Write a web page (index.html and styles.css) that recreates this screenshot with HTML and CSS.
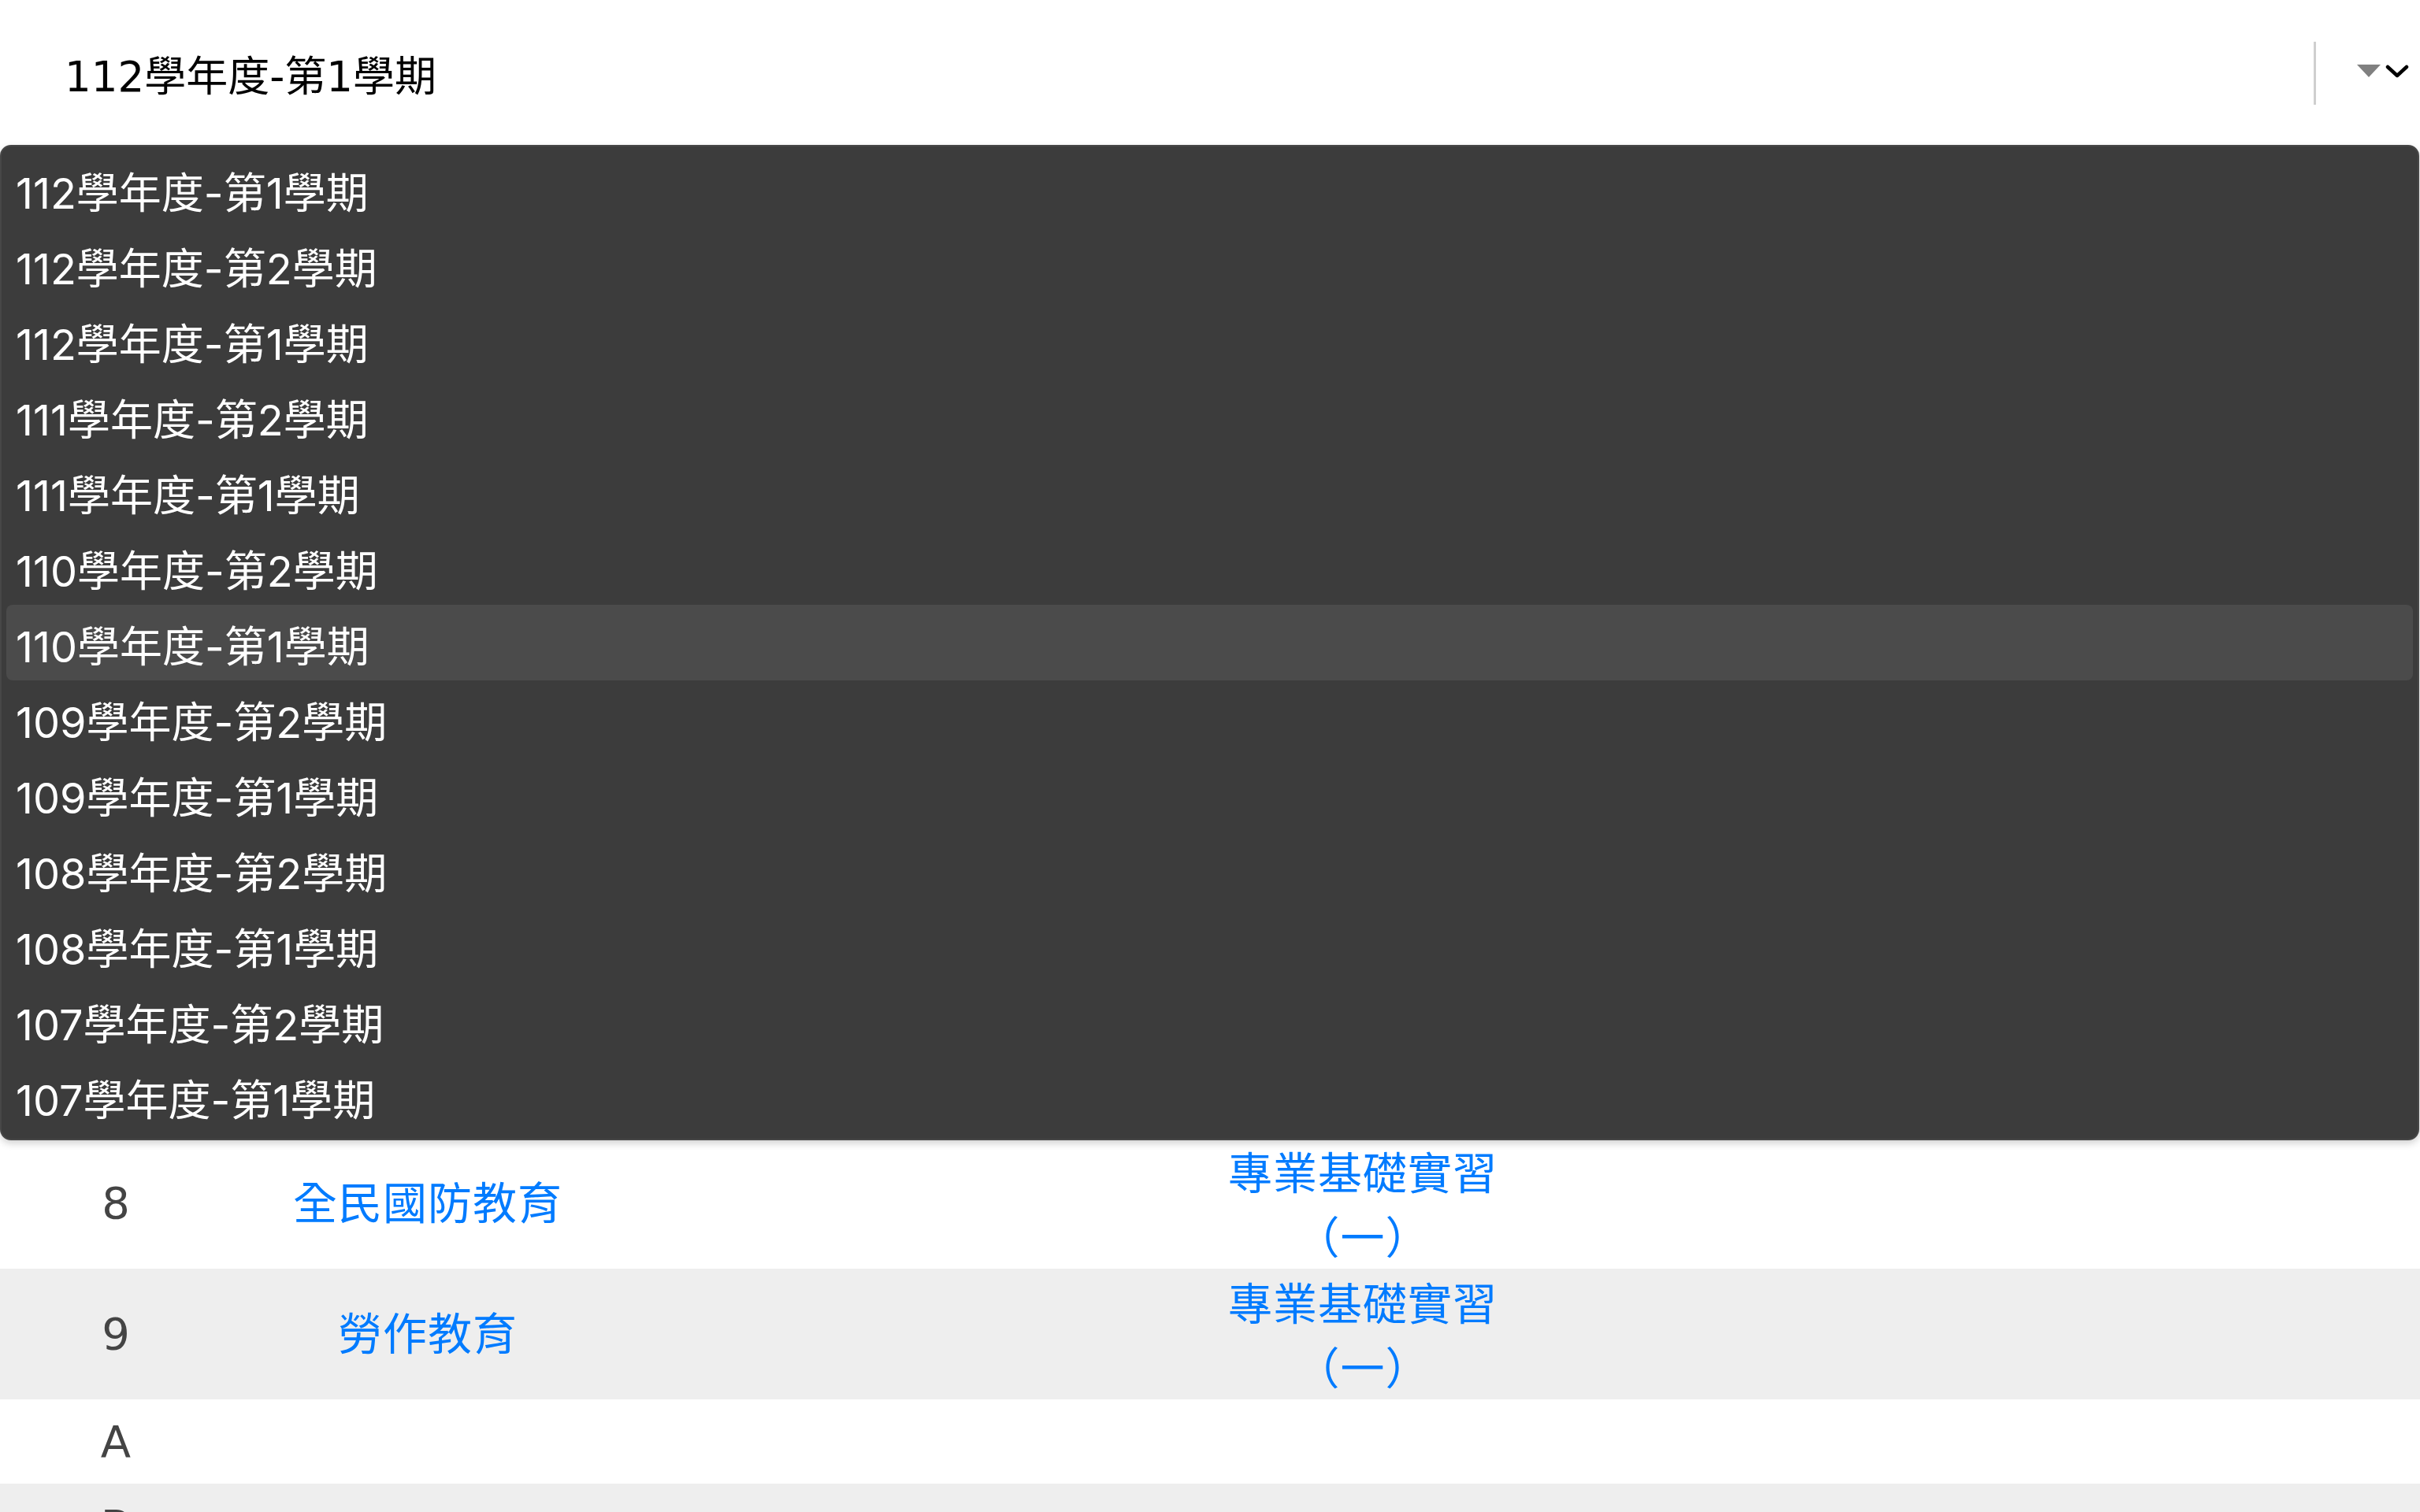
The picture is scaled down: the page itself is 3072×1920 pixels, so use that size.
FILE: index.html
```html
<!DOCTYPE html>
<html lang="zh-Hant">
<head>
<meta charset="utf-8">
<title>學期選擇</title>
<link rel="stylesheet" href="styles.css">
</head>
<body>
<div class="page">
  <div class="select-bar">
    <span class="select-value">112學年度-第1學期</span>
    <span class="select-sep"></span>
    <span class="select-caret"></span>
    <svg class="select-chevron" width="30" height="20" viewBox="0 0 30 20"><path d="M3 4 L15 15 L27 4" fill="none" stroke="#000" stroke-width="4.5" stroke-linecap="round" stroke-linejoin="round"/></svg>
  </div>

  <div class="table">
    <div class="row row-tall">
      <div class="cell c-num">8</div>
      <div class="cell c-name"><a class="link">全民國防教育</a></div>
      <div class="cell c-course"><a class="link wrap">專業基礎實習（一）</a></div>
      <div class="cell"></div>
    </div>
    <div class="row row-tall striped">
      <div class="cell c-num">9</div>
      <div class="cell c-name"><a class="link">勞作教育</a></div>
      <div class="cell c-course"><a class="link wrap">專業基礎實習（一）</a></div>
      <div class="cell"></div>
    </div>
    <div class="row">
      <div class="cell c-num">A</div>
      <div class="cell c-name"></div>
      <div class="cell c-course"></div>
      <div class="cell"></div>
    </div>
    <div class="row striped">
      <div class="cell c-num">B</div>
      <div class="cell c-name"></div>
      <div class="cell c-course"></div>
      <div class="cell"></div>
    </div>
  </div>

  <ul class="dropdown">
    <li class="opt">112學年度-第1學期</li>
    <li class="opt">112學年度-第2學期</li>
    <li class="opt">112學年度-第1學期</li>
    <li class="opt">111學年度-第2學期</li>
    <li class="opt">111學年度-第1學期</li>
    <li class="opt">110學年度-第2學期</li>
    <li class="opt opt-hover">110學年度-第1學期</li>
    <li class="opt">109學年度-第2學期</li>
    <li class="opt">109學年度-第1學期</li>
    <li class="opt">108學年度-第2學期</li>
    <li class="opt">108學年度-第1學期</li>
    <li class="opt">107學年度-第2學期</li>
    <li class="opt">107學年度-第1學期</li>
  </ul>
</div>
</body>
</html>
```

FILE: styles.css
```css
html, body {
  margin: 0;
  padding: 0;
  background: #fff;
}

body {
  font-family: "DejaVu Sans", "Noto Sans CJK TC", sans-serif;
  width: 3072px;
  height: 1920px;
  overflow: hidden;
}

.page {
  position: relative;
  width: 3072px;
  height: 1920px;
}

.select-bar {
  height: 184px;
  display: flex;
  align-items: center;
  padding-left: 82px;
  padding-right: 14px;
  box-sizing: border-box;
}

.select-value {
  flex: 1;
  font-size: 53px;
  color: #000;
  padding-top: 2px;
}

.select-sep {
  width: 3px;
  height: 80px;
  background: #cfcfcf;
  margin-right: 52px;
  margin-top: 2px;
}

.select-caret {
  width: 0;
  height: 0;
  border-left: 15px solid transparent;
  border-right: 15px solid transparent;
  border-top: 16px solid #808080;
  margin-right: 6px;
  margin-top: -4px;
}

.select-chevron {
  display: block;
  margin-top: -2px;
}

.table {
  margin-top: 1261px;
  font-size: 56px;
  color: #444;
}

.row {
  display: grid;
  grid-template-columns: 294px 498px 1876px 1fr;
  min-height: 107px;
  align-items: center;
}

.row-tall {
  min-height: 166px;
}

.striped {
  background: #eee;
}

.cell {
  text-align: center;
  line-height: 82px;
}

.c-name,
.c-course {
  margin-top: -3px;
}

.link {
  color: #007bff;
  text-decoration: none;
  font-family: "Noto Sans CJK TC", sans-serif;
  letter-spacing: 1px;
}

.wrap {
  display: inline-block;
  max-width: 400px;
  vertical-align: middle;
}

.dropdown {
  position: absolute;
  top: 184px;
  left: 0;
  width: 3071px;
  box-sizing: border-box;
  margin: 0;
  padding: 6px 6px;
  list-style: none;
  background: #3c3c3c;
  border: 2px solid #474747;
  border-radius: 14px;
  box-shadow: 0 4px 10px rgba(0, 0, 0, 0.18);
  font-family: Inter, "Noto Sans CJK TC", sans-serif;
  font-weight: 400;
  font-size: 54px;
  color: #fff;
}

.opt {
  height: 96px;
  box-sizing: border-box;
  padding-top: 12px;
  line-height: 84px;
  padding-left: 12px;
  border-radius: 8px;
  white-space: nowrap;
}

.opt-hover {
  background: #4b4b4b;
}
```
